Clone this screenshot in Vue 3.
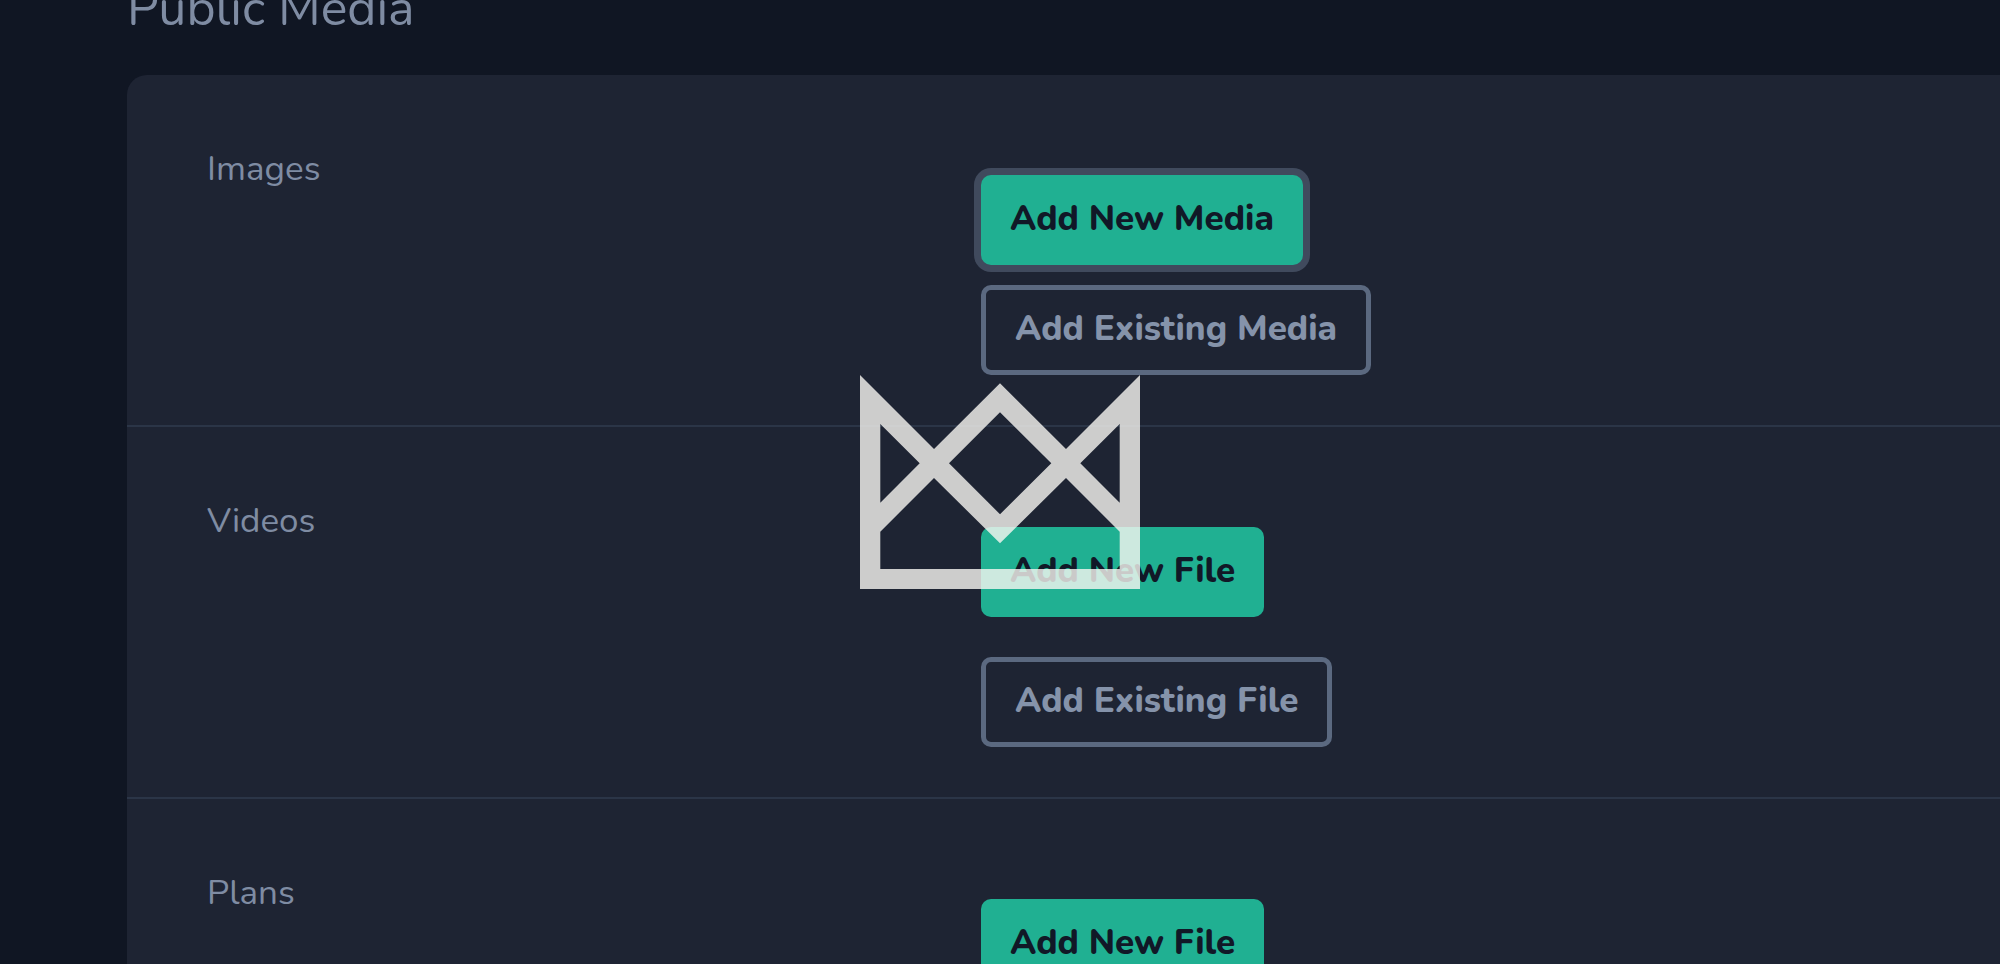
<script setup>
const rows = [
  { label: 'Images', add: 'Add New Media', existing: 'Add Existing Media', active: true },
  { label: 'Videos', add: 'Add New File', existing: 'Add Existing File' },
  { label: 'Plans', add: 'Add New File', existing: 'Add Existing File' }
]
</script>

<template>
  <main class="page">
    <h1 class="title">Public Media</h1>
    <section class="card">
      <div v-for="row in rows" :key="row.label" class="row" role="group" :aria-label="row.label">
        <h2 class="label">{{ row.label }}</h2>
        <div class="actions" :class="{ compact: row.active }">
          <button type="button" class="btn primary" :class="{ active: row.active }">{{ row.add }}</button>
          <button type="button" class="btn outline">{{ row.existing }}</button>
        </div>
      </div>
    </section>
    <svg class="mark" viewBox="0 0 280 214" aria-hidden="true">
      <path
        fill-rule="evenodd"
        d="M0 0L74 74L140 8.3L206 74L280 0V214H0Z
           M20.3 49V127.7L59.7 88.3Z
           M140 37.3L89 88.3L140 139.3L191.3 88.3Z
           M259.7 49V127.7L220.3 88.3Z
           M20.3 156.7L74 103L140 168.3L206 103L259.7 156.7V194H20.3Z"
      />
    </svg>
  </main>
</template>

<style>
body {
  margin: 0;
  background: #101623;
}
</style>

<style scoped>
.page {
  display: flow-root;
  height: 100vh;
  overflow: hidden;
  padding-left: 127px;
  box-sizing: border-box;
  background: #101623;
  color: #7f8ca3;
  font-family: Nunito, Lato, sans-serif;
}
.title {
  margin: -21px 0 36px;
  font-size: 50px;
  line-height: 60px;
  font-weight: 400;
}
.card {
  background: #1e2433;
  border-top-left-radius: 20px;
}
.row {
  display: grid;
  grid-template-columns: 854fr 1019fr;
  padding: 73px 0 50px;
  border-bottom: 2px solid #2b3547;
}
.label {
  margin: 0;
  padding-left: 80px;
  font-size: 35px;
  line-height: 42px;
  font-weight: 400;
}
.actions {
  display: flex;
  flex-direction: column;
  align-items: flex-start;
  gap: 40px;
  padding-top: 27px;
}
.actions.compact {
  gap: 20px;
}
.btn {
  height: 90px;
  padding: 0 29px 2px;
  border: 0;
  border-radius: 10px;
  font-family: inherit;
  font-size: 35px;
  line-height: 40px;
  font-weight: 800;
  white-space: nowrap;
}
.primary {
  background: #20b092;
  color: #111827;
}
.active {
  box-shadow: 0 0 0 7px #404a5d;
}
.outline {
  border: 5px solid #5b6980;
  background: transparent;
  color: #8593aa;
}
.mark {
  position: fixed;
  top: 50%;
  left: 50%;
  width: 280px;
  height: 214px;
  transform: translate(-50%, -50%);
  fill: rgba(249, 248, 242, 0.8);
  pointer-events: none;
}
</style>
